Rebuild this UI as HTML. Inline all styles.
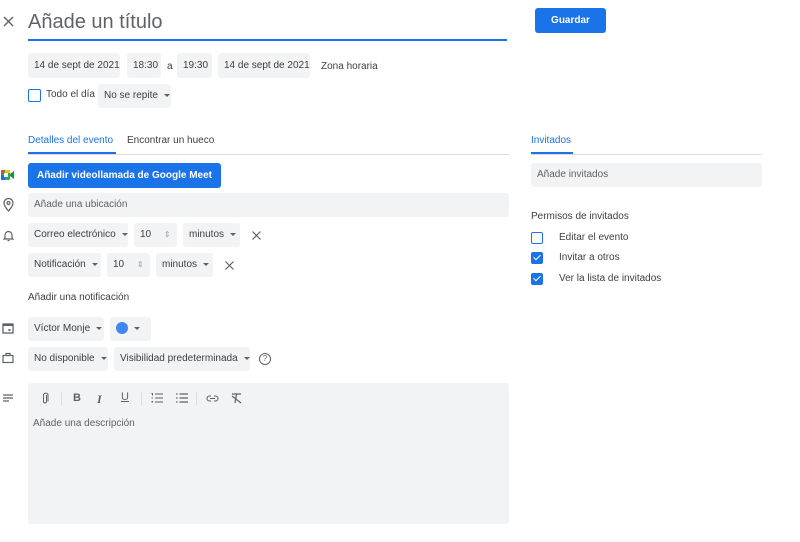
<!DOCTYPE html>
<html><head><meta charset="utf-8"><style>
*{margin:0;padding:0;box-sizing:border-box}
body{width:800px;height:542px;background:#fff;font-family:"Liberation Sans",Arial,sans-serif;color:#3c4043;position:relative;overflow:hidden;font-size:10px}
.a{position:absolute;white-space:nowrap}
.chip{position:absolute;background:#f1f3f4;border-radius:3px;height:24px;line-height:24px;padding-left:6px;font-size:10px;color:#3c4043;white-space:nowrap;overflow:hidden}
.car{display:inline-block;border-left:3px solid transparent;border-right:3px solid transparent;border-top:3px solid #5f6368;vertical-align:middle;margin-left:6px}
.cb{position:absolute;width:12px;height:12px;border:1.6px solid #1a73e8;border-radius:2px}
.cbc{background:#1a73e8}
.cbc:after{content:"";position:absolute;left:3px;top:0px;width:3px;height:6px;border:solid #fff;border-width:0 1.5px 1.5px 0;transform:rotate(45deg)}
</style></head><body>
<svg class="a" style="left:3px;top:16px" width="11" height="11" viewBox="0 0 11 11"><path d="M1 1L10 10M10 1L1 10" stroke="#5f6368" stroke-width="1.4"/></svg>
<div class="a" style="left:28px;top:11px;font-size:20px;color:#5f6368">Añade un título</div>
<div class="a" style="left:28px;top:39px;width:479px;height:2px;background:#1a73e8"></div>
<div class="a" style="left:535px;top:8px;width:71px;height:25px;background:#1a73e8;border-radius:3px;color:#fff;font-weight:bold;font-size:10px;text-align:center;line-height:25px">Guardar</div>

<div class="chip" style="left:28px;top:53px;width:92px;height:25px;line-height:25px">14 de sept de 2021</div>
<div class="chip" style="left:127px;top:53px;width:34px;height:25px;line-height:25px">18:30</div>
<div class="a" style="left:167px;top:61px">a</div>
<div class="chip" style="left:177px;top:53px;width:35px;height:25px;line-height:25px">19:30</div>
<div class="chip" style="left:218px;top:53px;width:92px;height:25px;line-height:25px">14 de sept de 2021</div>
<div class="a" style="left:321px;top:61px">Zona horaria</div>

<div class="cb" style="left:28px;top:89px;width:13px;height:13px"></div>
<div class="a" style="left:46px;top:89px">Todo el día</div>
<div class="chip" style="left:98px;top:84px;width:73px">No se repite<span class="car"></span></div>

<div class="a" style="left:28px;top:135px;color:#1a73e8">Detalles del evento</div>
<div class="a" style="left:127px;top:135px">Encontrar un hueco</div>
<div class="a" style="left:28px;top:154px;width:481px;height:1px;background:#dadce0"></div>
<div class="a" style="left:28px;top:152px;width:88px;height:2px;background:#1a73e8"></div>

<svg class="a" style="left:1px;top:170px" width="13" height="10" viewBox="0 0 13 10"><rect x="0" y="0" width="9" height="10" rx="1" fill="#34a853"/><rect x="0" y="5" width="4" height="5" fill="#1a73e8"/><rect x="4" y="0" width="5" height="3" fill="#fbbc04"/><rect x="3" y="3" width="4" height="4" fill="#fff"/><path d="M9 4L13 1V9L9 6Z" fill="#1e8e3e"/><rect x="0" y="0" width="3" height="4" fill="#ea4335"/></svg>
<div class="a" style="left:28px;top:163px;width:193px;height:25px;background:#1a73e8;border-radius:3px;color:#fff;font-weight:bold;font-size:10px;text-align:center;line-height:25px">Añadir videollamada de Google Meet</div>

<svg class="a" style="left:3px;top:198px" width="11" height="14" viewBox="0 0 11 14"><path d="M5.5 13C5.5 13 1 8 1 5A4.5 4.5 0 0 1 10 5C10 8 5.5 13 5.5 13Z" fill="none" stroke="#5f6368" stroke-width="1.3"/><circle cx="5.5" cy="5" r="1.5" fill="none" stroke="#5f6368" stroke-width="1.2"/></svg>
<div class="chip" style="left:28px;top:193px;width:481px;padding-left:6px;color:#5f6368">Añade una ubicación</div>

<svg class="a" style="left:3px;top:229px" width="11" height="13" viewBox="0 0 11 13"><path d="M2 9V6A3.5 3.5 0 0 1 9 6V9L10 10H1Z M4.5 11.5H6.5" fill="none" stroke="#5f6368" stroke-width="1.2"/></svg>
<div class="chip" style="left:28px;top:223px;width:100px">Correo electrónico<span class="car"></span></div>
<div class="chip" style="left:134px;top:223px;width:43px">10 <span style="color:#9aa0a6;font-size:8px;margin-left:10px">⇕</span></div>
<div class="chip" style="left:183px;top:223px;width:57px">minutos<span class="car"></span></div>
<svg class="a" style="left:252px;top:231px" width="9" height="9" viewBox="0 0 9 9"><path d="M0.5 0.5L8.5 8.5M8.5 0.5L0.5 8.5" stroke="#5f6368" stroke-width="1.2"/></svg>

<div class="chip" style="left:28px;top:253px;width:73px">Notificación<span class="car"></span></div>
<div class="chip" style="left:107px;top:253px;width:43px">10 <span style="color:#9aa0a6;font-size:8px;margin-left:10px">⇕</span></div>
<div class="chip" style="left:156px;top:253px;width:57px">minutos<span class="car"></span></div>
<svg class="a" style="left:225px;top:261px" width="9" height="9" viewBox="0 0 9 9"><path d="M0.5 0.5L8.5 8.5M8.5 0.5L0.5 8.5" stroke="#5f6368" stroke-width="1.2"/></svg>

<div class="a" style="left:28px;top:292px">Añadir una notificación</div>

<svg class="a" style="left:2px;top:322px" width="12" height="12" viewBox="0 0 12 12"><rect x="1" y="2" width="10" height="9" fill="none" stroke="#5f6368" stroke-width="1.3"/><rect x="1" y="2" width="10" height="2" fill="#5f6368"/><rect x="6.5" y="7" width="2" height="2" fill="#5f6368"/></svg>
<div class="chip" style="left:28px;top:317px;width:76px">Víctor Monje<span class="car"></span></div>
<div class="chip" style="left:110px;top:317px;width:41px"><span style="display:inline-block;width:12px;height:12px;border-radius:50%;background:#4285f4;vertical-align:middle"></span><span class="car"></span></div>

<svg class="a" style="left:2px;top:352px" width="12" height="12" viewBox="0 0 12 12"><rect x="1" y="3.5" width="10" height="7" fill="none" stroke="#5f6368" stroke-width="1.2"/><path d="M4 3.5V1.5H8V3.5" fill="none" stroke="#5f6368" stroke-width="1.2"/></svg>
<div class="chip" style="left:28px;top:347px;width:80px">No disponible<span class="car"></span></div>
<div class="chip" style="left:114px;top:347px;width:136px">Visibilidad predeterminada<span class="car"></span></div>
<div class="a" style="left:259px;top:353px;width:12px;height:12px;border:1.2px solid #5f6368;border-radius:50%;font-size:8px;text-align:center;line-height:10px;color:#5f6368">?</div>

<svg class="a" style="left:3px;top:394px" width="10" height="8" viewBox="0 0 10 8"><path d="M0 1H10M0 4H10M0 7H6" stroke="#5f6368" stroke-width="1.2"/></svg>
<div class="a" style="left:28px;top:383px;width:481px;height:141px;background:#f1f3f4;border-radius:3px"></div>
<svg class="a" style="left:41px;top:392px" width="8" height="13" viewBox="0 0 8 13"><path d="M5.5 3V9.5A1.5 1.5 0 0 1 2.5 9.5V2.5A2.5 2.5 0 0 1 7 2.5V9.5" fill="none" stroke="#5f6368" stroke-width="1"/></svg>
<div class="a" style="left:61px;top:392px;width:1px;height:13px;background:#dadce0"></div>
<div class="a" style="left:73px;top:392px;font-weight:bold;font-size:11px;color:#5f6368">B</div>
<div class="a" style="left:97px;top:392px;font-style:italic;font-family:'Liberation Serif',serif;font-weight:bold;font-size:12px;color:#5f6368">I</div>
<div class="a" style="left:121px;top:391px;text-decoration:underline;font-size:11px;color:#5f6368">U</div>
<div class="a" style="left:141px;top:392px;width:1px;height:13px;background:#dadce0"></div>
<svg class="a" style="left:151px;top:393px" width="12" height="10" viewBox="0 0 12 10"><path d="M4 1H12M4 5H12M4 9H12M0.5 0.5H1.5V2.5M0.5 5H2M0.5 8.5H2M0.5 10H2" stroke="#5f6368" stroke-width="1"/></svg>
<svg class="a" style="left:176px;top:393px" width="12" height="10" viewBox="0 0 12 10"><path d="M3.5 1H12M3.5 5H12M3.5 9H12M0 1H1.5M0 5H1.5M0 9H1.5" stroke="#5f6368" stroke-width="1.2"/></svg>
<div class="a" style="left:196px;top:392px;width:1px;height:13px;background:#dadce0"></div>
<svg class="a" style="left:206px;top:395px" width="13" height="7" viewBox="0 0 13 7"><path d="M5 1H3.5A2.5 2.5 0 0 0 3.5 6H5M8 1H9.5A2.5 2.5 0 0 1 9.5 6H8M4 3.5H9" fill="none" stroke="#5f6368" stroke-width="1.1"/></svg>
<svg class="a" style="left:231px;top:393px" width="11" height="11" viewBox="0 0 11 11"><path d="M1 1H10M5.5 1L4 10M1 3L10 10" stroke="#5f6368" stroke-width="1.2"/></svg>
<div class="a" style="left:33px;top:418px;color:#5f6368">Añade una descripción</div>

<div class="a" style="left:531px;top:135px;color:#1a73e8">Invitados</div>
<div class="a" style="left:531px;top:154px;width:231px;height:1px;background:#dadce0"></div>
<div class="a" style="left:531px;top:152px;width:42px;height:2px;background:#1a73e8"></div>
<div class="chip" style="left:531px;top:163px;width:231px;color:#5f6368">Añade invitados</div>
<div class="a" style="left:531px;top:211px">Permisos de invitados</div>
<div class="cb" style="left:531px;top:232px"></div>
<div class="a" style="left:559px;top:232px">Editar el evento</div>
<div class="cb cbc" style="left:531px;top:252px"></div>
<div class="a" style="left:559px;top:252px">Invitar a otros</div>
<div class="cb cbc" style="left:531px;top:273px"></div>
<div class="a" style="left:559px;top:273px">Ver la lista de invitados</div>
</body></html>
